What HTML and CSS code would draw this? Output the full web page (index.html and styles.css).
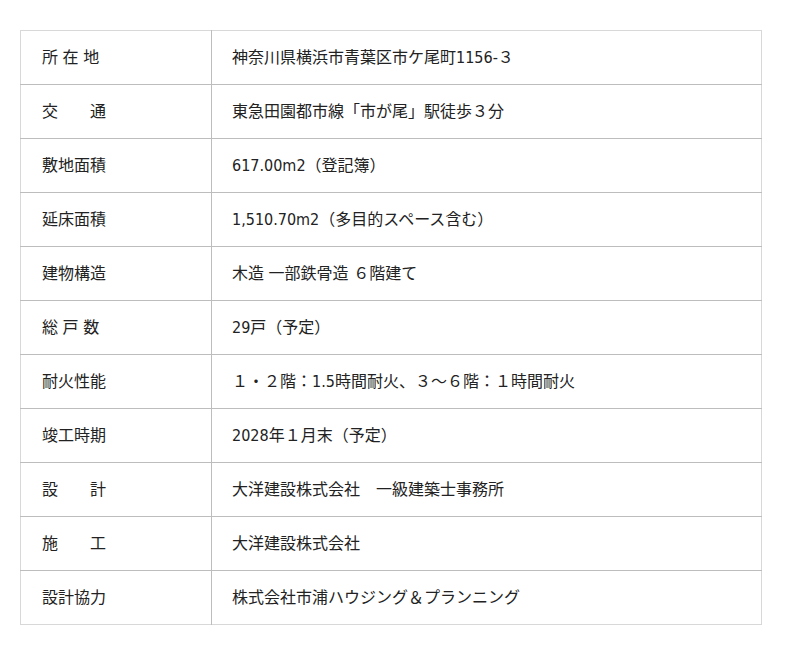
FILE: index.html
```html
<!DOCTYPE html>
<html lang="ja">
<head>
<meta charset="utf-8">
<link rel="stylesheet" href="styles.css">
</head>
<body>
<table class="spec">
<tr><th>所 在 地</th><td>神奈川県横浜市青葉区市ケ尾町1156-３</td></tr>
<tr><th>交　　通</th><td>東急田園都市線「市が尾」駅徒歩３分</td></tr>
<tr><th>敷地面積</th><td>617.00m2（登記簿）</td></tr>
<tr><th>延床面積</th><td>1,510.70m2（多目的スペース含む）</td></tr>
<tr><th>建物構造</th><td>木造 一部鉄骨造 ６階建て</td></tr>
<tr><th>総 戸 数</th><td>29戸（予定）</td></tr>
<tr><th>耐火性能</th><td>１・２階：1.5時間耐火、３～６階：１時間耐火</td></tr>
<tr><th>竣工時期</th><td>2028年１月末（予定）</td></tr>
<tr><th>設　　計</th><td>大洋建設株式会社　一級建築士事務所</td></tr>
<tr><th>施　　工</th><td>大洋建設株式会社</td></tr>
<tr><th>設計協力</th><td>株式会社市浦ハウジング＆プランニング</td></tr>
</table>
</body>
</html>
```
FILE: styles.css
```css
html, body { margin: 0; padding: 0; background: #fff; }
body {
  padding: 30px 38px 0 20px;
  font-family: "DejaVu Sans Condensed", "DejaVu Sans", "Noto Sans CJK JP", sans-serif;
  color: #222;
  font-size: 16px;
}
.spec {
  width: 742px;
  border-collapse: collapse;
  border: 1px solid #d8d8d8;
}
.spec th, .spec td {
  height: 53px;
  padding: 0 0 0 21px;
  text-align: left;
  font-weight: normal;
  border-top: 1px solid #bdbdbd;
  vertical-align: middle;
  line-height: 20px;
}
.spec tr:first-child th, .spec tr:first-child td { border-top: 1px solid #d8d8d8; }
.spec th { width: 169px; padding-left: 21px; border-right: 1px solid #bdbdbd; }
.spec td { padding-left: 20px; }
```
